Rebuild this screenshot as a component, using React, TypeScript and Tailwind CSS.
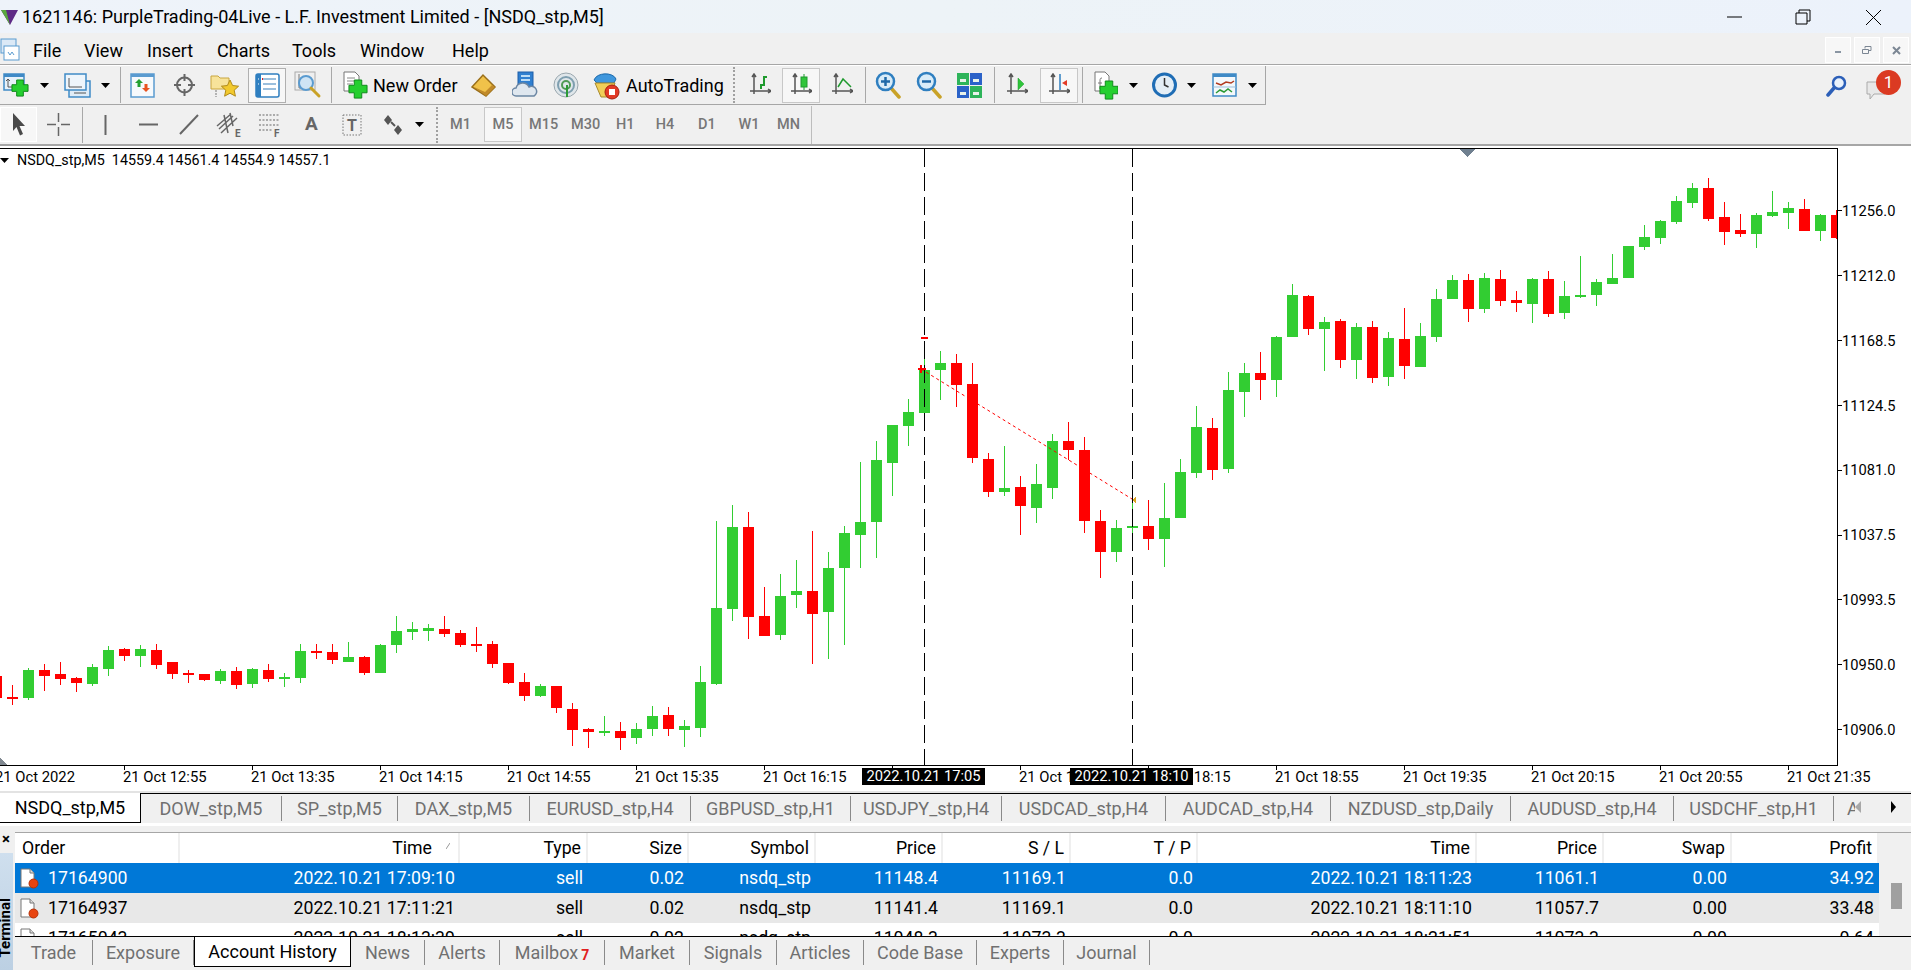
import type { ReactNode } from "react";

// [high, low, bodyTop, bodyBottom, up]
const CANDLES: [number, number, number, number, 0 | 1][] = [
  [674, 698, 676, 698, 0], [685, 705, 697, 699, 0], [668, 700, 670, 698, 1], [664, 691, 670, 676, 0],
  [662, 685, 674, 679, 0], [677, 692, 678, 683, 0], [664, 686, 667, 684, 1], [646, 676, 650, 669, 1],
  [648, 661, 649, 656, 0], [645, 667, 649, 656, 1], [644, 669, 650, 665, 0], [662, 679, 662, 674, 0],
  [670, 683, 673, 675, 0], [674, 681, 674, 680, 0], [669, 684, 671, 681, 1], [667, 689, 671, 685, 0],
  [668, 688, 669, 684, 1], [664, 682, 670, 679, 0], [673, 687, 677, 679, 1], [644, 683, 651, 678, 1],
  [644, 659, 651, 653, 0], [644, 664, 652, 660, 0], [642, 662, 657, 662, 1], [656, 675, 657, 673, 0],
  [644, 673, 645, 673, 1], [616, 653, 631, 645, 1], [622, 640, 629, 632, 1], [624, 641, 628, 631, 1],
  [616, 637, 629, 634, 0], [630, 647, 633, 645, 0], [627, 652, 644, 646, 0], [641, 668, 644, 664, 0],
  [663, 684, 663, 683, 0], [673, 701, 682, 696, 0], [684, 697, 686, 696, 1], [686, 713, 686, 708, 0],
  [703, 746, 709, 730, 0], [728, 748, 729, 732, 0], [716, 736, 731, 733, 1], [722, 750, 731, 738, 0],
  [723, 744, 729, 738, 1], [706, 736, 716, 729, 1], [707, 736, 715, 729, 0], [720, 747, 726, 730, 1],
  [666, 737, 682, 728, 1], [521, 685, 608, 684, 1], [505, 621, 527, 609, 1], [512, 639, 527, 617, 0],
  [587, 636, 616, 636, 0], [574, 640, 596, 635, 1], [560, 608, 591, 595, 1], [531, 664, 591, 614, 0],
  [552, 659, 568, 612, 1], [526, 645, 533, 568, 1], [462, 568, 522, 535, 1], [441, 558, 460, 522, 1],
  [425, 496, 425, 463, 1], [399, 446, 412, 426, 1], [359, 413, 370, 413, 1], [351, 400, 363, 370, 1],
  [354, 407, 363, 385, 0], [363, 463, 384, 458, 0], [453, 497, 459, 492, 0], [446, 496, 488, 492, 1],
  [476, 535, 487, 506, 0], [464, 523, 484, 508, 1], [434, 499, 441, 488, 1], [422, 460, 441, 450, 0],
  [437, 533, 450, 521, 0], [510, 578, 521, 552, 0], [520, 562, 528, 552, 1], [502, 533, 526, 528, 1],
  [500, 550, 526, 539, 0], [483, 567, 518, 539, 1], [459, 518, 472, 518, 1], [406, 478, 427, 473, 1],
  [418, 480, 428, 470, 0], [372, 473, 390, 469, 1], [363, 417, 373, 392, 1], [352, 400, 373, 380, 0],
  [336, 397, 337, 380, 1], [284, 337, 295, 337, 1], [295, 335, 296, 329, 0], [317, 371, 322, 329, 1],
  [319, 368, 321, 360, 0], [323, 379, 327, 360, 1], [321, 383, 327, 378, 0], [332, 386, 338, 377, 1],
  [308, 379, 339, 366, 0], [323, 367, 336, 367, 1], [289, 342, 299, 337, 1], [275, 299, 280, 299, 1],
  [274, 322, 280, 309, 0], [273, 313, 278, 309, 1], [270, 306, 279, 301, 0], [291, 312, 300, 303, 0],
  [278, 323, 279, 304, 1], [271, 317, 279, 314, 0], [281, 319, 296, 313, 1], [256, 298, 295, 296, 1],
  [279, 306, 282, 295, 1], [254, 284, 278, 284, 1], [246, 278, 246, 278, 1], [225, 250, 237, 247, 1],
  [220, 244, 221, 238, 1], [196, 224, 201, 222, 1], [183, 208, 188, 203, 1], [178, 221, 188, 219, 0],
  [202, 245, 217, 232, 0], [214, 237, 230, 234, 0], [213, 248, 215, 234, 1], [191, 217, 212, 216, 1],
  [202, 229, 208, 213, 1], [199, 231, 209, 231, 0], [214, 241, 215, 231, 1], [210, 239, 215, 238, 0],
];

const PRICES = ["11256.0", "11212.0", "11168.5", "11124.5", "11081.0", "11037.5", "10993.5", "10950.0", "10906.0"];
const TIMES = ["21 Oct 12:55", "21 Oct 13:35", "21 Oct 14:15", "21 Oct 14:55", "21 Oct 15:35", "21 Oct 16:15", "21 Oct 16:55", "21 Oct 17:35", "21 Oct 18:15", "21 Oct 18:55", "21 Oct 19:35", "21 Oct 20:15", "21 Oct 20:55", "21 Oct 21:35"];

const CHART_TABS: [string, string][] = [
  ["DOW_stp,M5", "w-[141px]"], ["SP_stp,M5", "w-[116px]"], ["DAX_stp,M5", "w-[132px]"], ["EURUSD_stp,H4", "w-[161px]"],
  ["GBPUSD_stp,H1", "w-[160px]"], ["USDJPY_stp,H4", "w-[151px]"], ["USDCAD_stp,H4", "w-[164px]"], ["AUDCAD_stp,H4", "w-[165px]"],
  ["NZDUSD_stp,Daily", "w-[180px]"], ["AUDUSD_stp,H4", "w-[163px]"], ["USDCHF_stp,H1", "w-[160px]"],
];

const GRID = "grid grid-cols-[165px_280px_128px_101px_127px_127px_128px_127px_279px_127px_128px_147px]";

const ROWS = [
  { order: "17164900", cells: ["2022.10.21 17:09:10", "sell", "0.02", "nsdq_stp", "11148.4", "11169.1", "0.0", "2022.10.21 18:11:23", "11061.1", "0.00", "34.92"], cls: "bg-[#0078d7] text-white" },
  { order: "17164937", cells: ["2022.10.21 17:11:21", "sell", "0.02", "nsdq_stp", "11141.4", "11169.1", "0.0", "2022.10.21 18:11:10", "11057.7", "0.00", "33.48"], cls: "bg-[#e8e8e8] text-black" },
  { order: "17165043", cells: ["2022.10.21 18:13:39", "sell", "0.02", "nsdq_stp", "11048.3", "11073.3", "0.0", "2022.10.21 18:21:51", "11073.3", "0.00", "-0.64"], cls: "bg-white text-black" },
];

function Drop({ className = "" }: { className?: string }) {
  return (
    <svg width="9" height="5" viewBox="0 0 9 5" className={`shrink-0 ${className}`}>
      <path d="M0 0h9L4.500 5z" fill="#000" />
    </svg>
  );
}

function Icon({ w = 26, h = 26, className = "", children }: { w?: number; h?: number; className?: string; children: ReactNode }) {
  return (
    <svg width={w} height={h} viewBox={`0 0 ${w} ${h}`} className={`shrink-0 ${className}`}>
      {children}
    </svg>
  );
}

function GreenPlus({ x, y, s = 7 }: { x: number; y: number; s?: number }) {
  return (
    <path
      d={`M${x - s / 2.4} ${y - s}h${s / 1.2}v${s / 1.7}h${s / 1.7}v${s / 1.2}h${-s / 1.7}v${s / 1.7}h${-s / 1.2}v${-s / 1.7}h${-s / 1.7}v${-s / 1.2}h${s / 1.7}z`}
      fill="#25cf2f"
      stroke="#118a1c"
      strokeWidth="1"
    />
  );
}

function MiniAxes({ x = 0, y = 0 }: { x?: number; y?: number }) {
  return (
    <path
      d={`M${x + 4} ${y + 1}v20M${x} ${y + 18}h21M${x + 2} ${y + 4}l2-3 2 3M${x + 18} ${y + 16}l3 2-3 2`}
      stroke="#555"
      strokeWidth="1.500"
      fill="none"
    />
  );
}

function Glass({ sign }: { sign: "+" | "-" }) {
  return (
    <Icon w={27} h={28}>
      <path d="M16 17l8 9" stroke="#c9a227" strokeWidth="3.500" strokeLinecap="round" />
      <circle cx="10.500" cy="10.500" r="8.500" fill="#d9ecf8" stroke="#2f7fc0" strokeWidth="2.500" />
      <path d={sign === "+" ? "M6 10.500h9M10.500 6v9" : "M6 10.500h9"} stroke="#1f69a8" strokeWidth="2.500" />
    </Icon>
  );
}

function OrderIcon() {
  return (
    <svg width="19" height="21" viewBox="0 0 19 21" className="ml-[5px] shrink-0">
      <path d="M1 1h9l4 4v14H1z" fill="#fff" stroke="#777" />
      <path d="M10 1v4h4" fill="#ddd" stroke="#777" />
      <circle cx="13.500" cy="15.500" r="4.500" fill="#e8440f" stroke="#b53108" />
    </svg>
  );
}

function Period({ className = "", children }: { className?: string; children: ReactNode }) {
  return <span className={`text-[14.500px] font-medium text-[#777] text-center shrink-0 ${className}`}>{children}</span>;
}

function Toolbars() {
  return (
    <div className="shrink-0 relative">
      {/* main toolbar */}
      <div className="h-[40px] flex items-center border-t border-white">
        <div className="flex items-center w-[1266px] h-[39px] border-r border-b border-[#a6a6a6]">
          <Icon w={26} h={24} className="ml-[3px]">
            <rect x="1" y="1" width="20" height="16" fill="#e6f1fa" stroke="#3f8ac6" strokeWidth="1.500" />
            <path d="M1 1h20v3H1z" fill="#3f8ac6" />
            <path d="M5 6v8h11M3 8l2-2 2 2" stroke="#555" fill="none" />
            <GreenPlus x={17} y={15} s={8} />
          </Icon>
          <Drop className="ml-[11px]" />
          <Icon w={27} h={25} className="ml-[15px]">
            <rect x="5" y="8" width="21" height="16" fill="#dfecf7" stroke="#3f8ac6" strokeWidth="1.500" />
            <rect x="1" y="1" width="21" height="16" fill="#eef5fb" stroke="#3f8ac6" strokeWidth="1.500" />
            <path d="M5 5v9h13M10 20h12" stroke="#555" fill="none" />
          </Icon>
          <Drop className="ml-[10px]" />
          <div className="ml-[10px] w-px h-[36px] bg-[#a8a8a8]" />
          <Icon w={25} h={25} className="ml-[9px]">
            <rect x="1" y="1" width="23" height="23" fill="#f6f9fc" stroke="#5a9bd0" strokeWidth="1.500" />
            <path d="M1 1h23v3H1z" fill="#5a9bd0" />
            <path d="M9 6l4 4h-2.500v4h-3v-4H5z" fill="#24a032" />
            <path d="M16 19l-4-4h2.500v-4h3v4H20z" fill="#e8531f" />
          </Icon>
          <Icon w={23} h={24} className="ml-[18px]">
            <circle cx="11.500" cy="12" r="7.500" fill="none" stroke="#666" strokeWidth="2" />
            <path d="M11.500 1v7M11.500 16v7M1 12h7M15 12h7" stroke="#666" strokeWidth="2" />
          </Icon>
          <Icon w={29} h={26} className="ml-[14px]">
            <path d="M1 4h7l2 2h9v11H1z" fill="#f7e39a" stroke="#c9a63f" />
            <path d="M20 8l2.600 5.500 6 .7-4.400 4 1.200 6-5.400-3-5.400 3 1.200-6-4.400-4 6-.7z" fill="#f2c92e" stroke="#b08a1a" />
            <path d="M6 18v7" stroke="#777" strokeDasharray="2 1" />
          </Icon>
          <div className="ml-[9px] w-[38px] h-[35px] shrink-0 flex items-center justify-center bg-[#f7f7f7] border border-[#b0b0b0]">
            <Icon w={25} h={25}>
              <rect x="1" y="1" width="23" height="23" rx="2" fill="#fff" stroke="#2f7fc0" strokeWidth="1.500" />
              <rect x="1" y="1" width="5" height="23" fill="#2f7fc0" />
              <path d="M8 6h13M8 11h13M8 16h13" stroke="#9bbfdd" strokeWidth="2" />
              <path d="M3 6h1M3 11h1" stroke="#fff" />
              <path d="M7 6h1" stroke="#e02020" strokeWidth="2" />
            </Icon>
          </div>
          <Icon w={28} h={28} className="ml-[8px]">
            <rect x="1" y="1" width="20" height="18" fill="#efefef" stroke="#aaa" />
            <path d="M5 3v14h13" stroke="#777" fill="none" />
            <circle cx="12" cy="12" r="7" fill="#cfe4f4" stroke="#5a9bd0" strokeWidth="2" />
            <path d="M17 17l8 8" stroke="#c9a227" strokeWidth="3" strokeLinecap="round" />
          </Icon>
          <div className="ml-[9px] w-px h-[36px] bg-[#a8a8a8]" />
          <Icon w={25} h={28} className="ml-[11px]">
            <path d="M1 1h11l4 4v15H1z" fill="#fff" stroke="#777" />
            <path d="M4 7h8M4 10h8M4 13h6" stroke="#888" />
            <GreenPlus x={15} y={18} s={9} />
          </Icon>
          <span className="ml-[5px] w-[87px] shrink-0 text-[18px] whitespace-nowrap text-black">New Order</span>
          <Icon w={26} h={24} className="ml-[11px]">
            <path d="M1 14L12 2l12 12-9 9z" fill="#f0c24a" stroke="#9a6f1a" strokeWidth="1.500" />
            <path d="M3 14l12 9 9-9-3-2-7 7z" fill="#c18a2a" />
          </Icon>
          <Icon w={26} h={28} className="ml-[15px]">
            <rect x="6" y="1" width="15" height="16" fill="#2f7fd0" stroke="#1f5fa8" />
            <path d="M9 5h9M9 9h9" stroke="#bcdcf5" strokeWidth="2" />
            <path d="M4 25a4 4 0 0 1 0-8 7 7 0 0 1 13-1 5 5 0 0 1 5 9z" fill="#dfe7ef" stroke="#6b86a3" strokeWidth="1.500" />
          </Icon>
          <Icon w={26} h={27} className="ml-[15px]">
            <circle cx="13" cy="13" r="12" fill="#dfe6ea" stroke="#9aa7ae" />
            <circle cx="13" cy="13" r="8" fill="none" stroke="#7f9fb0" strokeWidth="2" />
            <circle cx="13" cy="13" r="4" fill="none" stroke="#4f9a55" strokeWidth="2" />
            <path d="M14 13v12" stroke="#2c9a36" strokeWidth="2" />
          </Icon>
          <Icon w={30} h={30} className="ml-[12px]">
            <path d="M3 10c3-8 19-8 22-1l-2 4H6z" fill="#3f97dd" stroke="#1f6bab" />
            <path d="M4 13h20l-5 14H10z" fill="#f0cf58" stroke="#a88a2c" />
            <circle cx="21" cy="22" r="7" fill="#e23a26" stroke="#a6200f" />
            <rect x="18" y="19" width="6" height="6" fill="#fff" />
          </Icon>
          <span className="ml-[5px] w-[99px] shrink-0 text-[18px] whitespace-nowrap text-black">AutoTrading</span>
          <div className="ml-[8px] w-[3px] h-[36px] border-l-2 border-dotted border-[#a0a0a0]" />
          <Icon w={21} h={24} className="ml-[14px]">
            <MiniAxes />
            <path d="M11 16v-4h3V4h3" stroke="#1f9a2e" strokeWidth="2" fill="none" />
          </Icon>
          <div className="ml-[11px] w-[38px] h-[35px] shrink-0 flex items-center justify-center bg-[#f7f7f7] border border-[#c8c8c8]">
            <Icon w={21} h={24}>
              <MiniAxes />
              <path d="M13 1v16" stroke="#1f9a2e" />
              <rect x="10" y="4" width="6" height="10" fill="#2fc53a" stroke="#1f9a2e" />
            </Icon>
          </div>
          <Icon w={21} h={24} className="ml-[12px]">
            <MiniAxes />
            <path d="M6 14l5-8 8 8" stroke="#1f9a2e" strokeWidth="1.500" fill="none" />
          </Icon>
          <div className="ml-[12px] w-px h-[36px] bg-[#a8a8a8]" />
          <div className="ml-[9px]"><Glass sign="+" /></div>
          <div className="ml-[14px]"><Glass sign="-" /></div>
          <Icon w={25} h={25} className="ml-[14px]">
            <rect x="0" y="0" width="12" height="12" fill="#2eb45a" />
            <rect x="13" y="0" width="12" height="12" fill="#2b62c8" />
            <rect x="0" y="13" width="12" height="12" fill="#2b62c8" />
            <rect x="13" y="13" width="12" height="12" fill="#2eb45a" />
            <path d="M3 6h6v3H3zM16 6h6v3h-6zM3 19h6v3H3zM16 19h6v3h-6z" fill="#e8f2ea" />
          </Icon>
          <div className="ml-[12px] w-px h-[36px] bg-[#a8a8a8]" />
          <Icon w={21} h={24} className="ml-[12px]">
            <MiniAxes />
            <path d="M11 5l6 6-6 6z" fill="#2fc53a" stroke="#1f9a2e" strokeWidth="0.500" />
          </Icon>
          <div className="ml-[12px] w-[38px] h-[35px] shrink-0 flex items-center justify-center bg-[#f7f7f7] border border-[#c8c8c8]">
            <Icon w={21} h={24}>
              <MiniAxes />
              <path d="M11 1v16" stroke="#2f7fc0" strokeWidth="1.500" />
              <path d="M13 10l5-3v6z" fill="#e23a26" />
            </Icon>
          </div>
          <div className="ml-[4px] w-px h-[36px] bg-[#a8a8a8]" />
          <Icon w={24} h={29} className="ml-[11px]">
            <path d="M1 1h10l4 4v15H1z" fill="#fff" stroke="#777" />
            <path d="M8 7c-2 0-2 1-2 3v8M4 12h4" stroke="#777" fill="none" />
            <GreenPlus x={15} y={19} s={9} />
          </Icon>
          <Drop className="ml-[11px]" />
          <Icon w={25} h={26} className="ml-[14px]">
            <circle cx="12.500" cy="13" r="11" fill="#e4eef6" stroke="#1f6db5" strokeWidth="3" />
            <path d="M12.500 6v7l4 2" stroke="#333" strokeWidth="1.500" fill="none" />
          </Icon>
          <Drop className="ml-[10px]" />
          <Icon w={25} h={24} className="ml-[16px]">
            <rect x="1" y="1" width="23" height="22" fill="#f4f8fb" stroke="#3f8ac6" strokeWidth="1.500" />
            <path d="M1 1h23v3H1z" fill="#3f8ac6" />
            <path d="M4 10l5 2 5-3 5 1 3-2" stroke="#b23a1f" strokeWidth="1.500" fill="none" />
            <path d="M1 14h23" stroke="#9bbfdd" />
            <path d="M4 20l4-3 4 2 4-3 4 3" stroke="#2c9a36" strokeWidth="1.500" fill="none" />
          </Icon>
          <Drop className="ml-[11px]" />
        </div>
        <div className="ml-auto mr-[6px] flex items-center h-[39px]">
          <Icon w={21} h={22} className="mr-[18px]">
            <circle cx="13" cy="8" r="6" fill="#eaf2fb" stroke="#2c5fb8" strokeWidth="2.500" />
            <path d="M8 13l-6 7" stroke="#2c5fb8" strokeWidth="3.500" strokeLinecap="round" />
          </Icon>
          <div className="relative w-[40px] h-[30px]">
            <Icon w={22} h={22} className="absolute left-[0px] top-[8px]">
              <path d="M2 3h18v12H9l-4 5v-5H2z" fill="#e8e8e8" stroke="#aaa" />
            </Icon>
            <span className="absolute left-[11px] -top-[1px] w-[25px] h-[25px] rounded-full bg-[#db3a22] text-white text-[17px] leading-[25px] text-center">1</span>
          </div>
        </div>
      </div>
      {/* line studies + periods */}
      <div className="h-[39px] flex items-center">
        <div className="w-[37px] h-[35px] shrink-0 flex items-center justify-center bg-[#f7f7f7] border border-white">
          <Icon w={15} h={25}>
            <path d="M2 1l12 13H8.500l3.500 8-3 1.500L5.500 15 2 19z" fill="#4a4a4a" />
          </Icon>
        </div>
        <Icon w={23} h={23} className="ml-[10px]">
          <path d="M11.500 0v9M11.500 14v9M0 11.500h9M14 11.500h9" stroke="#666" strokeWidth="1.500" />
        </Icon>
        <div className="ml-[12px] w-px h-[36px] bg-[#a8a8a8]" />
        <Icon w={3} h={20} className="ml-[21px]"><path d="M1.500 0v20" stroke="#666" strokeWidth="2" /></Icon>
        <Icon w={19} h={3} className="ml-[32px]"><path d="M0 1.500h19" stroke="#666" strokeWidth="2" /></Icon>
        <Icon w={20} h={21} className="ml-[21px]"><path d="M1 20L19 1" stroke="#666" strokeWidth="2" /></Icon>
        <Icon w={27} h={26} className="ml-[17px]">
          <path d="M1 14L15 2M5 21L21 6M3 17l14-13M8 3l4 18M14 1l3 13" stroke="#666" strokeWidth="1.500" />
          <text x="19" y="25" fontSize="10" fontWeight="700" fill="#666" fontFamily="Roboto, sans-serif">E</text>
        </Icon>
        <Icon w={22} h={26} className="ml-[16px]">
          <path d="M0 3h21M0 8h21M0 13h21M0 18h14" stroke="#666" strokeDasharray="2 1.500" />
          <text x="15" y="25" fontSize="10" fontWeight="700" fill="#666" fontFamily="Roboto, sans-serif">F</text>
        </Icon>
        <span className="ml-[24px] w-[14px] shrink-0 text-[19px] font-bold text-[#666]">A</span>
        <Icon w={20} h={22} className="ml-[23px]">
          <rect x="1" y="1" width="18" height="20" fill="none" stroke="#777" strokeDasharray="1.500 1.500" />
          <text x="5" y="17" fontSize="16" fontWeight="700" fill="#666" fontFamily="Roboto, sans-serif">T</text>
        </Icon>
        <Icon w={22} h={22} className="ml-[20px]">
          <path d="M6 1l4 5-4 5-4-5zM16 11l4 5-4 5-4-5z" fill="#555" />
          <path d="M9 8l4 4" stroke="#555" strokeWidth="2" />
        </Icon>
        <Drop className="ml-[11px]" />
        <div className="ml-[12px] w-[3px] h-[36px] border-l-2 border-dotted border-[#a0a0a0]" />
        <Period className="ml-[11px] w-[19px]">M1</Period>
        <div className="ml-[15px] w-[38px] h-[35px] shrink-0 flex items-center justify-center bg-[#f7f7f7] border border-[#c8c8c8]">
          <Period>M5</Period>
        </div>
        <Period className="ml-[7px] w-[27px]">M15</Period>
        <Period className="ml-[15px] w-[27px]">M30</Period>
        <Period className="ml-[18px] w-[17px]">H1</Period>
        <Period className="ml-[22px] w-[20px]">H4</Period>
        <Period className="ml-[23px] w-[17px]">D1</Period>
        <Period className="ml-[23px] w-[22px]">W1</Period>
        <Period className="ml-[17px] w-[23px]">MN</Period>
        <div className="ml-[11px] w-px h-[38px] bg-[#bdbdbd]" />
      </div>
    </div>
  );
}

function Chart() {
  return (
    <div className="relative shrink-0 h-[645px] bg-white">
      <div className="flex h-[622px]">
        <svg width="1842" height="622" viewBox="0 148 1842 622" shapeRendering="crispEdges" className="shrink-0">
          <defs>
            <clipPath id="plot">
              <rect x="0" y="149" width="1837" height="616" />
            </clipPath>
          </defs>
          <g clipPath="url(#plot)">
            {CANDLES.map(([hi, lo, top, bot, up], i) => {
              const cx = 12 + 16 * (i - 1);
              const color = up ? "#32cd32" : "#ff0000";
              return (
                <g key={i} fill={color}>
                  <rect x={cx} y={hi} width="1" height={lo - hi} />
                  <rect x={cx - 5} y={top} width="11" height={Math.max(bot - top, 2)} />
                </g>
              );
            })}
            {Array.from({ length: 26 }, (_, i) => (
              <g key={i} fill="#000">
                <rect x="924" y={149 + 24 * i} width="1" height="18" />
                <rect x="1132" y={149 + 24 * i} width="1" height="18" />
              </g>
            ))}
            <path d="M921 369L1132 499" stroke="#ff0000" strokeDasharray="3 3" shapeRendering="auto" />
            <path d="M921 338h7M918 369h8M921 365v8" stroke="#ff0000" strokeWidth="1.500" />
            <path d="M1136 496v8l-4-4z" fill="#daa520" />
            <path d="M1460 149h15l-7.500 8z" fill="#708090" />
            <path d="M0 758v7h7z" fill="#808890" />
          </g>
          <path d="M0 148.500H1837.500V765.500H0" fill="none" stroke="#000" />
          {TIMES.map((_, i) => (
            <path key={i} d={`M${124.5 + 128 * i} 765v5`} stroke="#000" />
          ))}
          {PRICES.map((_, i) => (
            <path key={i} d={`M1837 ${Math.round(210 + 64.9 * i) + 0.5}h5`} stroke="#000" />
          ))}
        </svg>
        <div className="pt-[30.500px] text-[14.700px] text-black">
          {PRICES.map((p) => (
            <div key={p} className="h-[64.900px] flex items-center">{p}</div>
          ))}
        </div>
      </div>
      <div className="flex h-[22px] -mt-[1px] -ml-[5px] text-[14.800px] leading-[16px] text-black overflow-hidden">
        <div className="w-[128px] shrink-0">21 Oct 2022</div>
        {TIMES.map((t) => (
          <div key={t} className="w-[128px] shrink-0">{t}</div>
        ))}
      </div>
      <div className="h-[2px] bg-[#e3e3e3]" />

      {/* overlays: symbol line and crosshair dates */}
      <div className="absolute left-0 top-[4px] flex items-center text-[14.300px] leading-[16px] text-black">
        <Drop className="ml-0" />
        <span className="ml-[8px] whitespace-pre">NSDQ_stp,M5  14559.4 14561.4 14554.9 14557.1</span>
      </div>
      <span className="absolute left-[862px] top-[620px] w-[123px] h-[17px] bg-black text-white text-[14.700px] leading-[17px] text-center">2022.10.21 17:05</span>
      <span className="absolute left-[1070px] top-[620px] w-[123px] h-[17px] bg-black text-white text-[14.700px] leading-[17px] text-center">2022.10.21 18:10</span>
    </div>
  );
}

function ChartTabs() {
  return (
    <div className="shrink-0 h-[30px] flex bg-[#f0f0f0] text-[18px] leading-[30px]">
      <div className="w-[141px] h-[30px] shrink-0 bg-white border-r border-b border-black text-center text-black">NSDQ_stp,M5</div>
      <div className="flex-1 border-t border-black h-[30px] flex items-center overflow-hidden relative">
        {CHART_TABS.map(([t, w]) => (
          <div key={t} className={`${w} shrink-0 h-[25px] flex items-center justify-center border-r border-[#8a8a8a] text-[#707070]`}>{t}</div>
        ))}
        <div className="pl-[13px] w-[21px] overflow-hidden text-[#707070]">A</div>
        <svg width="46" height="12" viewBox="0 0 46 12" className="absolute right-[10px] top-[7px]">
          <path d="M6 0v12L0 6z" fill="#a8a8a8" />
          <path d="M36 0v12l5-6z" fill="#000" />
        </svg>
      </div>
    </div>
  );
}

function HeaderCell({ className = "", children }: { className?: string; children: ReactNode }) {
  return <div className={`flex items-center justify-end pr-[5px] border-r-2 border-[#efefef] ${className}`}>{children}</div>;
}

function Terminal() {
  const tabs: [string, string][] = [
    ["Trade", "w-[78px]"], ["Exposure", "w-[101px]"], ["Account History", "w-[157px]"], ["News", "w-[74px]"], ["Alerts", "w-[75px]"],
    ["Mailbox", "w-[105px]"], ["Market", "w-[85px]"], ["Signals", "w-[87px]"], ["Articles", "w-[87px]"], ["Code Base", "w-[113px]"],
    ["Experts", "w-[87px]"], ["Journal", "w-[86px]"],
  ];
  return (
    <div className="flex-1 flex min-h-0 bg-[#f0f0f0] border-t-[3px] border-white">
      <div className="w-[15px] shrink-0 flex flex-col overflow-hidden">
        <div className="h-[27px] pt-[6px] pl-[2px] text-[15px] leading-[15px] font-bold text-black">×</div>
        <div className="flex-1 w-[13px] bg-gradient-to-b from-[#cfdfee] to-[#bcd0e3] flex items-start justify-start overflow-hidden">
          <span className="mt-[45px] text-[15px] leading-[10px] font-bold text-black [writing-mode:vertical-rl] rotate-180 whitespace-nowrap">Terminal</span>
        </div>
      </div>
      <div className="flex-1 min-w-0 flex flex-col pt-[6px]">
        <div className="h-[104px] shrink-0 flex border-t border-[#a6a6a6] overflow-hidden">
          <div className="w-[1864px] shrink-0 text-[17.700px] leading-[30px]">
            <div className={`${GRID} h-[30px] bg-white text-black`}>
              <div className="flex items-center pl-[7px] border-r-2 border-[#efefef]">Order</div>
              <HeaderCell className="pr-[8px]">
                Time
                <svg width="4" height="6" viewBox="0 0 4 6" className="ml-[14px] mb-[4px]">
                  <path d="M0 6L4 0" stroke="#999" />
                </svg>
              </HeaderCell>
              <HeaderCell>Type</HeaderCell>
              <HeaderCell>Size</HeaderCell>
              <HeaderCell>Symbol</HeaderCell>
              <HeaderCell>Price</HeaderCell>
              <HeaderCell>S / L</HeaderCell>
              <HeaderCell>T / P</HeaderCell>
              <HeaderCell>Time</HeaderCell>
              <HeaderCell>Price</HeaderCell>
              <HeaderCell>Swap</HeaderCell>
              <HeaderCell className="border-r-0">Profit</HeaderCell>
            </div>
            {ROWS.map((r) => (
              <div key={r.order} className={`${GRID} h-[30px] ${r.cls}`}>
                <div className="flex items-center">
                  <OrderIcon />
                  <span className="ml-[9px]">{r.order}</span>
                </div>
                {r.cells.map((c, i) => (
                  <div key={i} className="text-right pr-[5px]">{c}</div>
                ))}
              </div>
            ))}
          </div>
          <div className="flex-1 flex justify-center pt-[50px] bg-[#f0f0f0]">
            <div className="w-[11px] h-[26px] bg-[#a0a0a0] ml-[2px]" />
          </div>
        </div>
        <div className="h-[31px] shrink-0 flex border-t border-black text-[18px] leading-[30px]">
          {tabs.map(([t, w]) =>
            t === "Account History" ? (
              <div key={t} className={`${w} shrink-0 h-[30px] bg-white border-x border-b border-black text-center text-black`}>{t}</div>
            ) : (
              <div key={t} className={`${w} shrink-0 h-[25px] mt-[3px] flex items-center justify-center border-r border-[#8a8a8a] text-[#707070]`}>
                {t}
                {t === "Mailbox" && <span className="ml-[3px] mt-[5px] text-[14px] font-bold text-[#e02020]">7</span>}
              </div>
            )
          )}
        </div>
      </div>
    </div>
  );
}

export default function App() {
  return (
    <div className="w-screen h-screen overflow-hidden flex flex-col bg-[#f0f0f0] font-['Roboto',sans-serif]">
      <div className="h-[33px] shrink-0 flex items-center bg-gradient-to-r from-[#eef3fa] via-[#edf3f7] to-[#ecf2fb]">
        <svg width="18" height="19" viewBox="0 0 18 19" className="ml-[1px] shrink-0">
          <path d="M0 3h17l-8 15z" fill="#5e2a86" />
          <path d="M0 3l5 0 4 15z" fill="#5aa83e" />
        </svg>
        <span className="ml-[3px] text-[18px] text-black whitespace-nowrap">1621146: PurpleTrading-04Live - L.F. Investment Limited - [NSDQ_stp,M5]</span>
        <svg width="160" height="20" viewBox="0 0 160 20" className="ml-auto mr-[24px]">
          <path d="M0 10h15" stroke="#000" />
          <path d="M69 6h11v11H69z" fill="none" stroke="#000" />
          <path d="M72 6V3h11v11h-3" fill="none" stroke="#000" />
          <path d="M139 3l15 15M154 3l-15 15" stroke="#000" />
        </svg>
      </div>
      <div className="h-[32px] shrink-0 flex items-center pt-[3px] text-[18px] text-black border-b border-[#a6a6a6]">
        <svg width="21" height="24" viewBox="0 0 21 24" className="shrink-0">
          <rect x="1" y="1" width="15" height="14" fill="#dbe9f6" stroke="#5a9bd0" />
          <rect x="4" y="8" width="15" height="14" fill="#fff" stroke="#5a9bd0" />
          <path d="M8 14l2 3 2-3 2 3" stroke="#5a9bd0" fill="none" />
        </svg>
        <span className="ml-[12px] w-[51px]">File</span>
        <span className="w-[63px]">View</span>
        <span className="w-[70px]">Insert</span>
        <span className="w-[75px]">Charts</span>
        <span className="w-[68px]">Tools</span>
        <span className="w-[92px]">Window</span>
        <span>Help</span>
        <div className="ml-auto flex gap-[3px] mr-[2px]">
          <div className="w-[26px] h-[26px] bg-[#f7f7f7] border border-white flex items-center justify-center">
            <div className="w-[6px] h-[2px] mt-[4px] bg-[#8a96a3]" />
          </div>
          <div className="w-[26px] h-[26px] bg-[#f7f7f7] border border-white flex items-center justify-center">
            <svg width="10" height="9" viewBox="0 0 10 9">
              <path d="M3 2.500V.500h6v4H7M.500 3.500h6v4h-6z" fill="none" stroke="#7c8794" />
            </svg>
          </div>
          <div className="w-[26px] h-[26px] bg-[#f7f7f7] border border-white flex items-center justify-center">
            <svg width="9" height="9" viewBox="0 0 9 9">
              <path d="M1 1l7 7M8 1L1 8" stroke="#7c8794" strokeWidth="2" />
            </svg>
          </div>
        </div>
      </div>
      <Toolbars />
      <div className="shrink-0 h-[2px] bg-[#a6a6a6]" />
      <div className="shrink-0 h-[2px] bg-white" />
      <Chart />
      <ChartTabs />
      <Terminal />
    </div>
  );
}
